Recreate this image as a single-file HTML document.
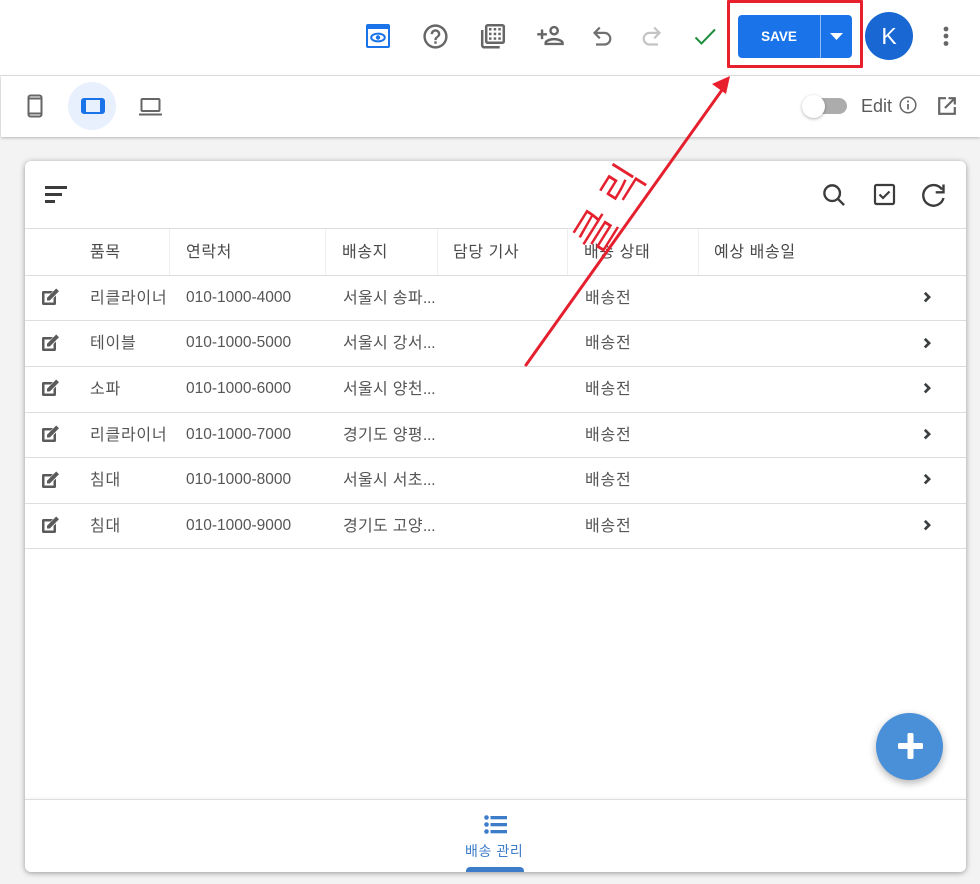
<!DOCTYPE html>
<html lang="ko"><head><meta charset="utf-8"><title>배송 관리</title>
<style>
html,body{margin:0;padding:0;width:980px;height:884px;overflow:hidden;background:#f3f3f3;font-family:"Liberation Sans","Noto Sans CJK KR",sans-serif;color:#555}
div,span{position:absolute;white-space:nowrap}
svg{position:absolute;overflow:visible}
em{font-style:normal;letter-spacing:-.3px}
.k{font-size:16px;letter-spacing:.75px;line-height:22px}
.a{letter-spacing:.3px}
.h{color:#4a4a4a;letter-spacing:.6px}
.n{font-size:15.5px;line-height:22px;letter-spacing:0;color:#555}
.line{left:25px;width:941px;height:1px;background:#ddd}
.vl{top:229px;width:1px;height:46px;background:#eee}
</style></head><body>
<div style="left:0;top:0;width:980px;height:75px;background:#fff"></div>
<div style="left:0;top:75px;width:980px;height:1px;background:#e4e4e4"></div>
<div style="left:1px;top:76px;width:979px;height:61px;background:#fff;box-shadow:0 1px 3px rgba(0,0,0,.25)"></div>
<div style="left:25px;top:161px;width:941px;height:711px;background:#fff;border-radius:6px;box-shadow:0 1px 6px rgba(0,0,0,.38)"></div>

<!-- top icons -->
<svg style="left:366px;top:24px" width="24" height="24" viewBox="0 0 24 24"><rect width="24" height="24" rx="2" fill="#1a73e8"/><rect x="2" y="5" width="20" height="17" fill="#fff"/><ellipse cx="12" cy="13.500" rx="6.800" ry="3.900" fill="#fff" stroke="#1a73e8" stroke-width="2"/><circle cx="12" cy="13.500" r="2.200" fill="#1a73e8"/></svg>
<svg style="left:421px;top:22px" width="29" height="29" viewBox="0 0 24 24" fill="#666"><path d="M11 18h2v-2h-2v2zm1-16C6.480 2 2 6.480 2 12s4.480 10 10 10 10-4.480 10-10S17.520 2 12 2zm0 18c-4.410 0-8-3.590-8-8s3.590-8 8-8 8 3.590 8 8-3.590 8-8 8zm0-14c-2.210 0-4 1.790-4 4h2c0-1.100.9-2 2-2s2 .9 2 2c0 2-3 1.750-3 5h2c0-2.250 3-2.500 3-5 0-2.210-1.790-4-4-4z"/></svg>
<svg style="left:481px;top:24px" width="24" height="25" viewBox="0 0 24 25" fill="none"><path d="M1.200 6v15.300a2 2 0 0 0 2 2h15.500" stroke="#666" stroke-width="2.500"/><rect x="5.200" y="1.200" width="17.600" height="17.600" rx="1.500" stroke="#666" stroke-width="2.500"/><g fill="#666"><rect x="8" y="4" width="2.500" height="2.500"/><rect x="12.700" y="4" width="2.500" height="2.500"/><rect x="17.300" y="4" width="2.500" height="2.500"/><rect x="8" y="8.700" width="2.500" height="2.500"/><rect x="12.700" y="8.700" width="2.500" height="2.500"/><rect x="17.300" y="8.700" width="2.500" height="2.500"/><rect x="8" y="13.300" width="2.500" height="2.500"/><rect x="12.700" y="13.300" width="2.500" height="2.500"/><rect x="17.300" y="13.300" width="2.500" height="2.500"/></g></svg>
<svg style="left:536px;top:21px" width="29" height="29" viewBox="0 0 24 24" fill="#666"><path d="M15 12c2.210 0 4-1.790 4-4s-1.790-4-4-4-4 1.790-4 4 1.790 4 4 4zm0-6c1.100 0 2 .9 2 2s-.9 2-2 2-2-.9-2-2 .9-2 2-2zm0 8c-2.670 0-8 1.340-8 4v2h16v-2c0-2.660-5.330-4-8-4zm-6 4c.22-.72 3.310-2 6-2 2.700 0 5.800 1.290 6 2H9zm-3-3v-3h3v-2H6V7H4v3H1v2h3v3h2z"/></svg>
<svg style="left:592px;top:25px" width="22" height="22" viewBox="0 0 22 22" fill="none" stroke="#707070" stroke-width="2.200"><path d="M4 19.500h8.500a5.800 5.800 0 0 0 0-11.600H3"/><path d="M7.800 2.500L2.500 7.900l5.300 5.400"/></svg>
<svg style="left:640px;top:25px" width="22" height="22" viewBox="0 0 22 22" fill="none" stroke="#c4c4c4" stroke-width="2.200"><path d="M18 19.500H9.500a5.800 5.800 0 0 1 0-11.600H19"/><path d="M14.200 2.500l5.300 5.400-5.300 5.400"/></svg>
<svg style="left:694px;top:28px" width="23" height="18" viewBox="0 0 23 18" fill="none" stroke="#1e8e3e" stroke-width="2"><path d="M1.500 9.500l6 6L21 1.500"/></svg>

<!-- save -->
<div style="left:738px;top:15px;width:114px;height:43px;background:#1a73e8;border-radius:4px"></div>
<div style="left:820px;top:15px;width:1px;height:43px;background:#8fbaf3"></div>
<div style="left:738px;top:15px;width:82px;height:43px;text-align:center;color:#fff;font:700 13.5px/43px 'Liberation Sans',sans-serif;letter-spacing:0">SAVE</div>
<svg style="left:830px;top:33px" width="13" height="7"><path d="M0 0h13L6.500 7z" fill="#fff"/></svg>
<div style="left:865px;top:12px;width:48px;height:48px;border-radius:50%;background:#1967d2;color:#fff;text-align:center;font-size:23px;line-height:48px">K</div>
<svg style="left:943px;top:26px" width="6" height="20" fill="#666"><circle cx="3" cy="3" r="2.400"/><circle cx="3" cy="10" r="2.400"/><circle cx="3" cy="17.500" r="2.400"/></svg>

<!-- second bar -->
<div style="left:68px;top:82px;width:48px;height:48px;border-radius:50%;background:#e8f0fe"></div>
<svg style="left:27px;top:94px" width="16" height="24" viewBox="0 0 16 24" fill="none" stroke="#666" stroke-width="2"><rect x="1.500" y="1.500" width="13" height="21" rx="2"/><path d="M1.500 4.500h13M1.500 19.500h13"/></svg>
<svg style="left:81px;top:98px" width="24" height="16" viewBox="0 0 24 16" fill="none" stroke="#1a73e8" stroke-width="2"><rect x="1" y="1" width="22" height="14" rx="2"/><rect x="1" y="1" width="4" height="14" fill="#1a73e8" stroke="none"/><rect x="19" y="1" width="4" height="14" fill="#1a73e8" stroke="none"/></svg>
<svg style="left:139px;top:98px" width="23" height="18" viewBox="0 0 23 18" fill="none" stroke="#666" stroke-width="2"><rect x="2.500" y="1" width="18" height="12" rx="1"/><path d="M0 16.500h23"/></svg>
<div style="left:812px;top:98px;width:35px;height:16px;border-radius:8px;background:#acacac"></div>
<div style="left:802px;top:95px;width:23px;height:23px;border-radius:50%;background:#fff;box-shadow:0 1px 3px rgba(0,0,0,.3)"></div>
<div style="left:861px;top:94px;font-size:18px;line-height:24px;color:#5a5a5a">Edit</div>
<svg style="left:899px;top:96px" width="18" height="18" viewBox="0 0 18 18" fill="none" stroke="#666" stroke-width="1.500"><circle cx="9" cy="9" r="7.800"/><path d="M9 8v5.500" stroke-width="1.800"/><path d="M9 4.500v2" stroke-width="1.800"/></svg>
<svg style="left:937px;top:96px" width="20" height="20" viewBox="0 0 20 20" fill="none" stroke="#666" stroke-width="2.200"><path d="M9 2.200H2.200v15.600h15.600V11"/><path d="M11.500 2.200h6.300v6.300M17.500 2.500L8 12"/></svg>

<!-- card toolbar -->
<svg style="left:45px;top:186px" width="23" height="18" fill="#3c3c3c"><rect width="22" height="3"/><rect y="7" width="17" height="3"/><rect y="14" width="10" height="3"/></svg>
<svg style="left:823px;top:184px" width="22" height="22" viewBox="0 0 24 24" fill="none" stroke="#3c3c3c" stroke-width="2.600"><circle cx="10" cy="10" r="8.500"/><path d="M16 16l7 7"/></svg>
<svg style="left:874px;top:184px" width="21" height="21" viewBox="0 0 21 21" fill="none" stroke="#3c3c3c"><rect x="1" y="1" width="19" height="19" rx="1.500" stroke-width="2.200"/><path d="M5.500 10.500l3.500 3.500 6.500-6.500" stroke-width="2.200"/></svg>
<svg style="left:921px;top:183px" width="25" height="25" viewBox="0 0 25 25" fill="none" stroke="#3c3c3c" stroke-width="2.400"><path d="M21 6.500A10.300 10.300 0 1 0 22.500 15"/><path d="M22.500 1.500v7.800h-7.800"/></svg>

<!-- table -->
<div class="line" style="top:228px"></div><div class="line" style="top:275px"></div>
<div class="line" style="top:320px"></div><div class="line" style="top:366px"></div>
<div class="line" style="top:412px"></div><div class="line" style="top:457px"></div>
<div class="line" style="top:503px"></div><div class="line" style="top:548px"></div>
<div class="vl" style="left:169px"></div><div class="vl" style="left:325px"></div><div class="vl" style="left:437px"></div><div class="vl" style="left:567px"></div><div class="vl" style="left:698px"></div>
<div class="k h" style="left:90px;top:242px">품목</div>
<div class="k h" style="left:186px;top:242px">연락처</div>
<div class="k h" style="left:342px;top:242px">배송지</div>
<div class="k h" style="left:453px;top:242px">담당 기사</div>
<div class="k h" style="left:584px;top:242px">배송 상태</div>
<div class="k h" style="left:714px;top:242px">예상 배송일</div>

<div class="k" style="left:90px;top:288px">리클라이너</div><div class="n" style="left:186px;top:287px">010-1000-4000</div><div class="k a" style="left:343px;top:288px">서울시 송파<em>...</em></div><div class="k" style="left:585px;top:288px">배송전</div>
<div class="k" style="left:90px;top:333px">테이블</div><div class="n" style="left:186px;top:332px">010-1000-5000</div><div class="k a" style="left:343px;top:333px">서울시 강서<em>...</em></div><div class="k" style="left:585px;top:333px">배송전</div>
<div class="k" style="left:90px;top:379px">소파</div><div class="n" style="left:186px;top:378px">010-1000-6000</div><div class="k a" style="left:343px;top:379px">서울시 양천<em>...</em></div><div class="k" style="left:585px;top:379px">배송전</div>
<div class="k" style="left:90px;top:425px">리클라이너</div><div class="n" style="left:186px;top:424px">010-1000-7000</div><div class="k a" style="left:343px;top:425px">경기도 양평<em>...</em></div><div class="k" style="left:585px;top:425px">배송전</div>
<div class="k" style="left:90px;top:470px">침대</div><div class="n" style="left:186px;top:469px">010-1000-8000</div><div class="k a" style="left:343px;top:470px">서울시 서초<em>...</em></div><div class="k" style="left:585px;top:470px">배송전</div>
<div class="k" style="left:90px;top:516px">침대</div><div class="n" style="left:186px;top:515px">010-1000-9000</div><div class="k a" style="left:343px;top:516px">경기도 고양<em>...</em></div><div class="k" style="left:585px;top:516px">배송전</div>

<svg width="0" height="0"><defs><g id="e"><path d="M1 4.500a1.500 1.500 0 0 1 1.500-1.500h9.500l-2.500 2.500H3.500v9h9V10l2.500-2.500v8a1.500 1.500 0 0 1-1.500 1.500h-11A1.500 1.500 0 0 1 1 15.500z" fill="#5a5a5a"/><path d="M6 12.500V9.700L15.200.5l2.800 2.800-9.200 9.200z" fill="#5a5a5a"/></g><path id="c" d="M1.800 .8l4.300 4.300-4.300 4.300" fill="none" stroke="#3c4043" stroke-width="2.700"/></defs></svg>
<svg style="left:41px;top:288px" width="19" height="18"><use href="#e"/></svg>
<svg style="left:41px;top:334px" width="19" height="18"><use href="#e"/></svg>
<svg style="left:41px;top:379px" width="19" height="18"><use href="#e"/></svg>
<svg style="left:41px;top:425px" width="19" height="18"><use href="#e"/></svg>
<svg style="left:41px;top:471px" width="19" height="18"><use href="#e"/></svg>
<svg style="left:41px;top:516px" width="19" height="18"><use href="#e"/></svg>
<svg style="left:923px;top:292px" width="8" height="10"><use href="#c"/></svg>
<svg style="left:923px;top:338px" width="8" height="10"><use href="#c"/></svg>
<svg style="left:923px;top:383px" width="8" height="10"><use href="#c"/></svg>
<svg style="left:923px;top:429px" width="8" height="10"><use href="#c"/></svg>
<svg style="left:923px;top:474px" width="8" height="10"><use href="#c"/></svg>
<svg style="left:923px;top:520px" width="8" height="10"><use href="#c"/></svg>

<!-- fab -->
<div style="left:876px;top:713px;width:67px;height:67px;border-radius:50%;background:#4a90d9;box-shadow:0 3px 8px rgba(0,0,0,.3)"></div>
<svg style="left:898px;top:733px" width="24" height="26"><rect x="9.500" y="0" width="6" height="26" rx="1.500" fill="#fff"/><rect x="0" y="10" width="25" height="6" rx="1.500" fill="#fff"/></svg>

<!-- bottom nav -->
<div style="left:25px;top:799px;width:941px;height:1px;background:#ddd;box-shadow:0 -1px 2px rgba(0,0,0,.08)"></div>
<svg style="left:484px;top:815px" width="24" height="19" fill="#3d7cc9"><circle cx="2.500" cy="2.500" r="2.300"/><circle cx="2.500" cy="9.500" r="2.300"/><circle cx="2.500" cy="16.500" r="2.300"/><rect x="6.500" y="1" width="16.500" height="3.300"/><rect x="6.500" y="8" width="16.500" height="3.300"/><rect x="6.500" y="15" width="16.500" height="3.300"/></svg>
<div style="left:465px;top:841px;font-size:14px;letter-spacing:.6px;line-height:20px;color:#3d7cc9">배송 관리</div>
<div style="left:466px;top:867px;width:58px;height:5px;background:#3d7cc9;border-radius:4px 4px 0 0"></div>

<!-- annotations -->
<div style="left:727px;top:0;width:130px;height:62px;border:3px solid #e8202e;border-radius:1px"></div>
<svg style="left:0;top:0" width="980" height="884">
<path d="M526 365L722 90" stroke="#e5202e" stroke-width="3" stroke-linecap="round" fill="none"/>
<path d="M730 76L726 94 712 84z" fill="#e8202e"/>
<text x="0" y="0" transform="translate(598 256) rotate(-58)" font-family="'Noto Sans CJK KR',sans-serif" font-size="44" font-weight="300" fill="#e5202e" stroke="#e5202e" stroke-width=".5" letter-spacing="12">클릭</text>
</svg>
</body></html>
